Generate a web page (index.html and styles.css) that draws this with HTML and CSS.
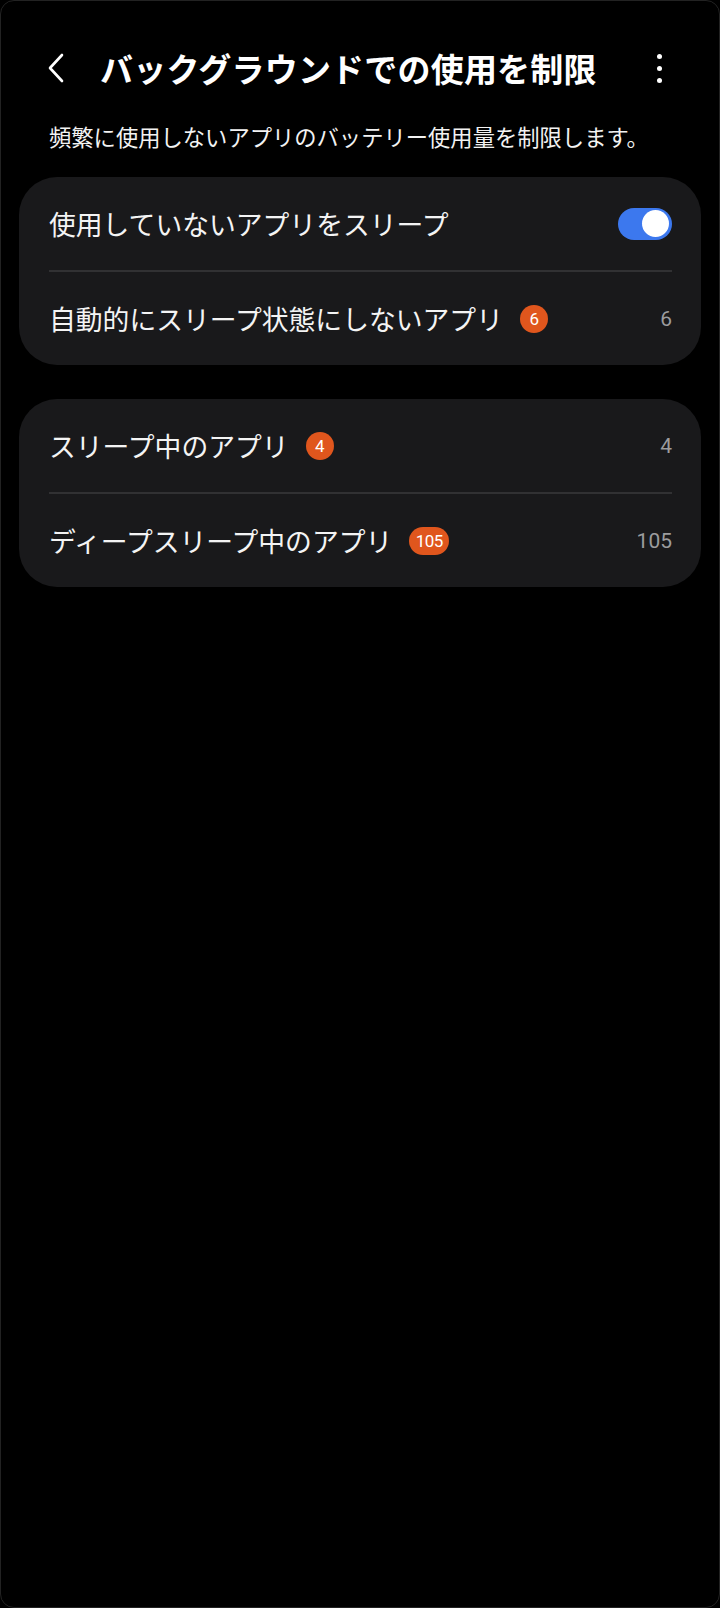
FILE: index.html
```html
<!DOCTYPE html>
<html lang="ja">
<head>
    <meta charset="UTF-8">
    <meta name="viewport" content="width=device-width, initial-scale=1.0">
    <title>バックグラウンドでの使用を制限</title>
    <link rel="stylesheet" href="styles.css">
</head>
<body>
    <div class="screen">
        <div class="header">
            <div class="back">
                <svg width="24" height="32" viewBox="0 0 24 32">
                    <path d="M17 3 L5 16 L17 29" fill="none" stroke="#fff" stroke-width="2.6" stroke-linecap="round" stroke-linejoin="round"/>
                </svg>
            </div>
            <h1>バックグラウンドでの使用を制限</h1>
            <div class="more">
                <span></span><span></span><span></span>
            </div>
        </div>
        <p class="desc">頻繁に使用しないアプリのバッテリー使用量を制限します。</p>

        <div class="card">
            <div class="row">
                <div class="label">使用していないアプリをスリープ</div>
                <div class="toggle on"><div class="knob"></div></div>
            </div>
            <div class="divider"></div>
            <div class="row">
                <div class="label">自動的にスリープ状態にしないアプリ<span class="badge">6</span></div>
                <div class="count">6</div>
            </div>
        </div>

        <div class="card">
            <div class="row">
                <div class="label">スリープ中のアプリ<span class="badge">4</span></div>
                <div class="count">4</div>
            </div>
            <div class="divider"></div>
            <div class="row">
                <div class="label">ディープスリープ中のアプリ<span class="badge wide">105</span></div>
                <div class="count">105</div>
            </div>
        </div>
    </div>
</body>
</html>
```

FILE: styles.css
```css
body {
    margin: 0;
    background-color: #000;
    font-family: "Noto Sans CJK JP", "Noto Sans", sans-serif;
    color: #fff;
}
.screen {
    box-sizing: border-box;
    height: 1608px;
    border: 1px solid #222;
    border-radius: 14px;
    overflow: hidden;
}
.header {
    display: flex;
    align-items: center;
    height: 56px;
    margin-top: 39px;
    padding: 0 0 0 44px;
}
.back {
    width: 24px;
    height: 32px;
    margin-right: 31px;
}
h1 {
    flex: 1;
    margin: 0;
    font-size: 33px;
    font-weight: 700;
    line-height: 56px;
    letter-spacing: 0.2px;
}
.more {
    display: flex;
    flex-direction: column;
    align-items: center;
    gap: 7px;
    width: 40px;
    margin-right: 40px;
}
.more span {
    width: 5px;
    height: 5px;
    border-radius: 50%;
    background-color: #fff;
}
.desc {
    margin: 24px 0 25px 48px;
    font-size: 22.3px;
    line-height: 32px;
    color: #f2f2f2;
}
.card {
    margin: 0 18px 34px 18px;
    background-color: #19191b;
    border-radius: 38px;
}
.row {
    display: flex;
    align-items: center;
    justify-content: space-between;
    height: 93px;
    padding: 0 29px 0 30px;
}
.label {
    display: flex;
    align-items: center;
    font-size: 26.8px;
    line-height: 36px;
    color: #f4f4f4;
}
.badge {
    display: inline-flex;
    align-items: center;
    justify-content: center;
    min-width: 28px;
    height: 28px;
    margin-left: 17px;
    padding: 0 2px;
    box-sizing: border-box;
    border-radius: 14px;
    background-color: #e0561d;
    color: #fff;
    font-family: Roboto, "Noto Sans", sans-serif;
    font-size: 17px;
    letter-spacing: -0.5px;
}
.badge.wide {
    min-width: 40px;
    padding: 0 4px;
}
.count {
    font-family: Roboto, "Noto Sans", sans-serif;
    font-size: 21px;
    color: #9c9c9e;
}
.divider {
    height: 2px;
    margin: 0 29px 0 30px;
    background-color: #313133;
}
.toggle {
    box-sizing: border-box;
    width: 54px;
    height: 32px;
    border-radius: 16px;
    background-color: #3c78ee;
    display: flex;
    align-items: center;
    justify-content: flex-end;
    padding: 0 3px;
}
.knob {
    width: 27px;
    height: 27px;
    border-radius: 50%;
    background-color: #fff;
}
```
